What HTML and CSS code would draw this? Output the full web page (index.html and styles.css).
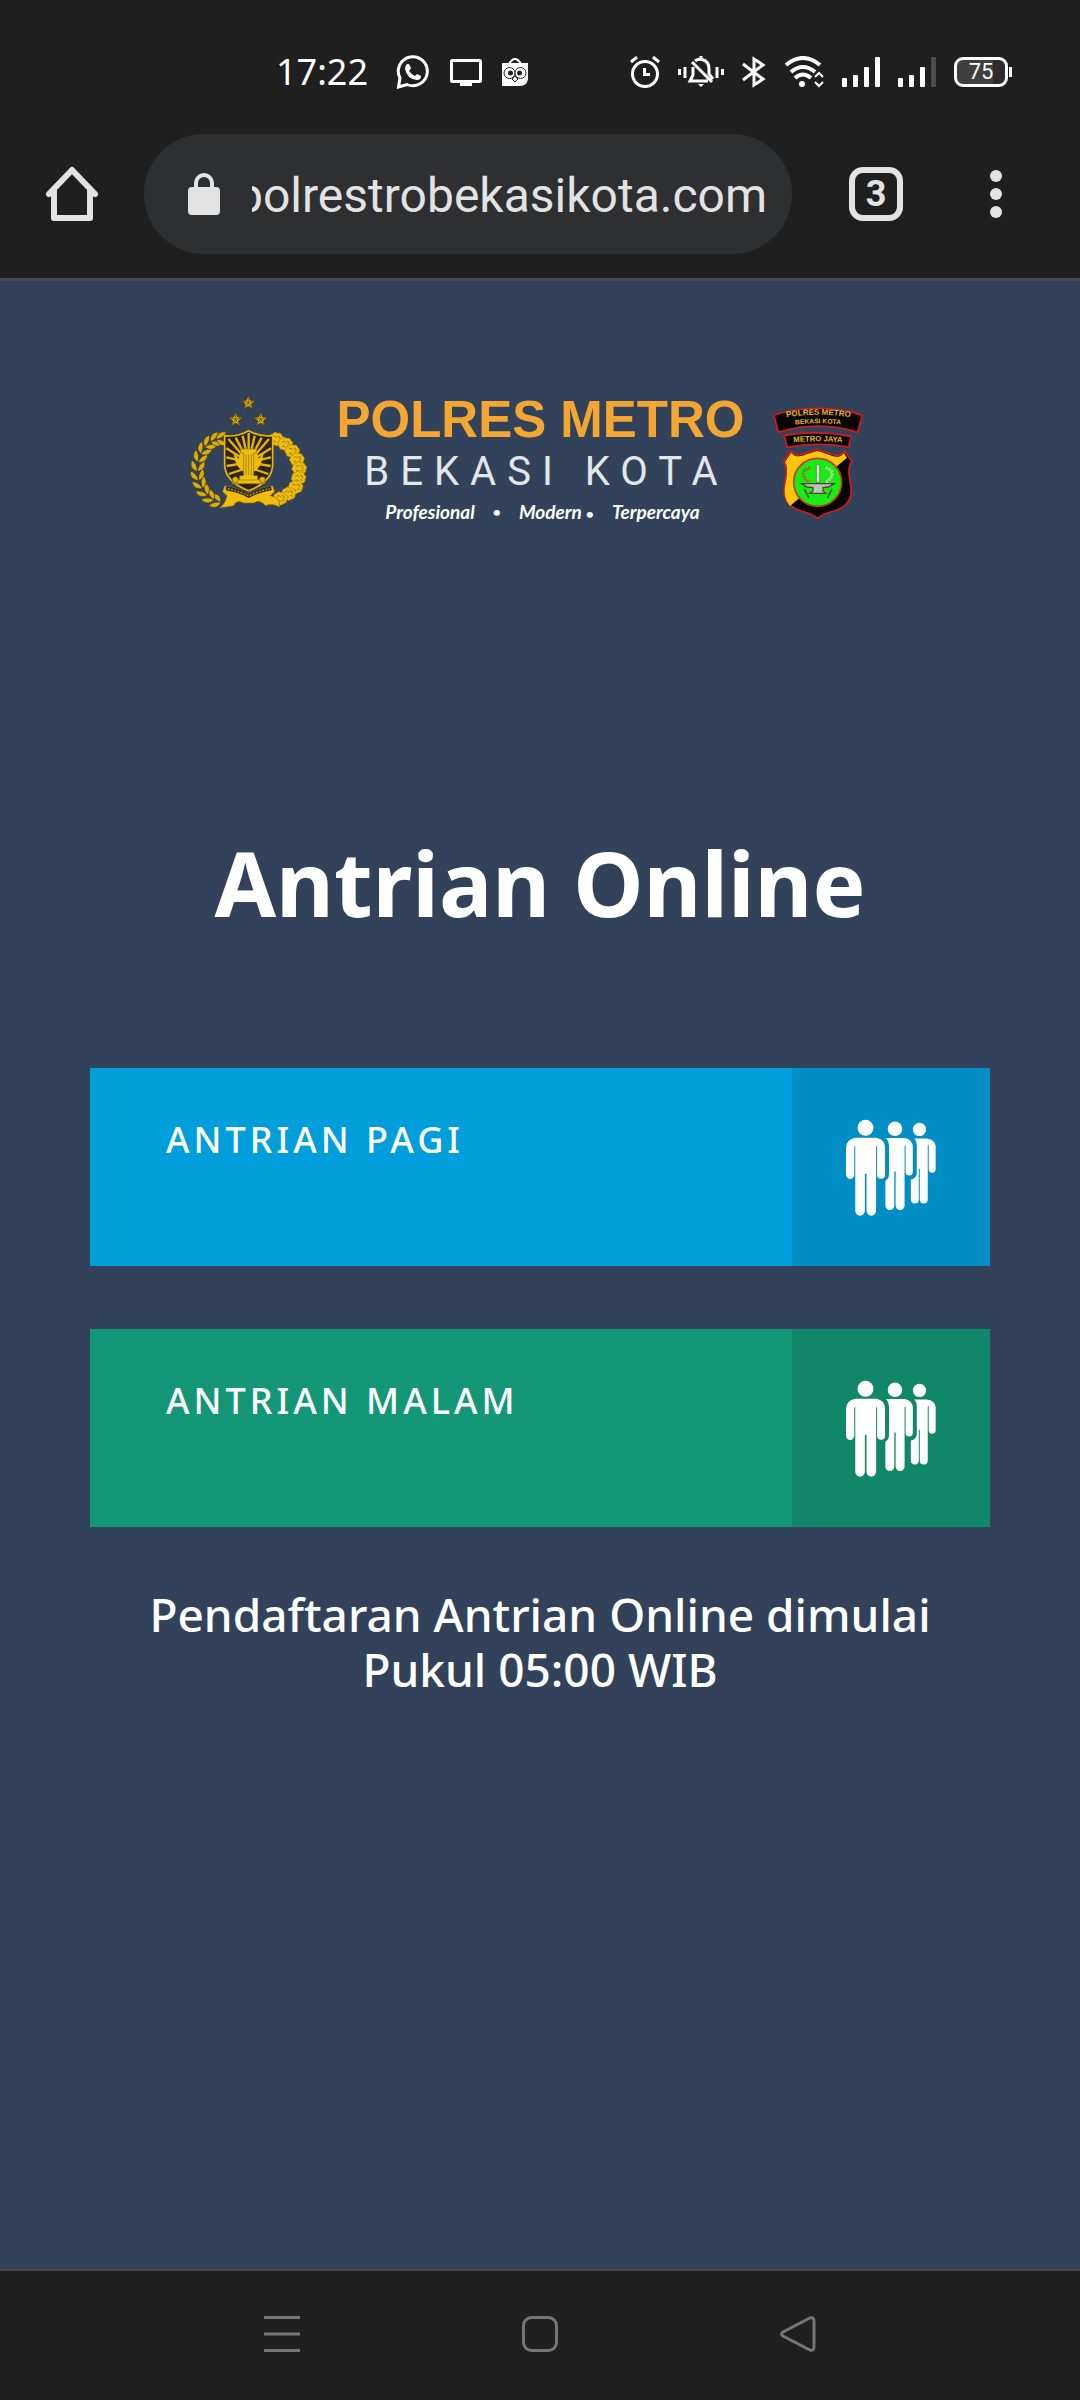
FILE: index.html
```html
<!DOCTYPE html>
<html lang="id">
<head>
<meta charset="utf-8">
<meta name="viewport" content="width=device-width, initial-scale=1">
<title>Antrian Online</title>
<link rel="stylesheet" href="styles.css">
</head>
<body>
<svg class="defs" width="0" height="0" aria-hidden="true">
  <defs>
    <symbol id="people" viewBox="197 170 272 290">
      <g fill="currentColor">
        <circle cx="256" cy="195" r="24"/>
        <path d="M227 225H288Q315 229 315 256V337A12 12 0 0 1 291 337V251H288V446A14.500 14.500 0 0 1 259 446V334H254V446A14.500 14.500 0 0 1 225 446V251H222V337A12.500 12.500 0 0 1 197 337V256Q199 228 227 225Z"/>
        <circle cx="345" cy="198" r="22"/>
        <path d="M317 226H374Q398 230 399 253V328A11 11 0 0 1 377 328V249H374V430A13.500 13.500 0 0 1 347 430V327H343V430A13.500 13.500 0 0 1 316 430V355Q327 350 327 335V250Q326 233 317 226Z"/>
        <circle cx="419" cy="200" r="20"/>
        <path d="M403 227H441Q466 230 468 250V320A10.500 10.500 0 0 1 447 320V248H444V412A12 12 0 0 1 420 412V319H417V412A12 12 0 0 1 393 412V351Q411 348 411 330V250Q411 234 403 227Z"/>
      </g>
    </symbol>
    <g id="star">
      <path d="M0-23 6-7 22-6 9 4 14 20 0 11-14 20-9 4-22-6-6-7Z" fill="#e2b310" stroke="#3a3320" stroke-width="2"/>
      <path d="M0 0V-18M0 0L18-5M0 0 11 16M0 0-11 16M0 0-18-5" fill="none" stroke="#4a3b10" stroke-width="2"/>
    </g>
    <g id="leaf">
      <path d="M0 12C-19 9-24-6-19-20C-8-14-1-3 0 12ZM0 12C19 9 24-6 19-20C8-14 1-3 0 12Z" fill="#d9ac0d" stroke="#40381d" stroke-width="2"/>
    </g>
    <g id="boll">
      <path d="M-20-4Q-20-14-11-15Q-5-24 3-17Q14-20 17-10Q26-4 19 5Q20 15 9 16Q1 24-7 17Q-18 18-18 8Q-26 3-20-4Z" fill="#f0bd0a" stroke="#b98b08" stroke-width="2"/>
      <path d="M-10-6Q-2-12 2-3M4-9Q13-9 11 1M-10 7Q-3 3 0 11M5 6Q11 4 13 9" fill="none" stroke="#9b7410" stroke-width="3"/>
    </g>
  </defs>
</svg>

<header class="browser">
  <div class="status">
    <div class="status-group">
      <time class="clock">17:22</time>
      <svg width="34" height="34" viewBox="0 0 34 34" fill="none" stroke="#fff" stroke-width="3"><path d="M4 23A14.500 14.500 0 1 1 11 29.500L2.500 32Z"/><path d="M9.500 11Q11 8 13 9L15 13Q14 15 13 16Q16 20 19 21L21 19L25 21Q25 25 21 25Q11 24 9 14Z" fill="#fff" stroke="none"/></svg>
      <svg width="32" height="28" viewBox="0 0 32 28"><rect x="1.500" y="2.500" width="29" height="21" rx="1" fill="none" stroke="#fff" stroke-width="3"/><path d="M10 24h12v4H10z" fill="#fff"/></svg>
      <svg width="26" height="28" viewBox="0 0 26 28"><path d="M0 5H26V21Q25 28 18 28H0Z" fill="#fff"/><path d="M7 6Q13-4 19 6" fill="none" stroke="#fff" stroke-width="2"/><g fill="#fff" stroke="#222" stroke-width="1"><circle cx="7.500" cy="15" r="5.500"/><circle cx="18.500" cy="15" r="5.500"/><path d="M13 18l3 3-3 3-3-3z"/></g><circle cx="8.500" cy="15" r="2.500" fill="#222"/><circle cx="17.500" cy="15" r="2.500" fill="#222"/></svg>
    </div>
    <div class="status-group status-icons">
      <svg width="30" height="32" viewBox="0 0 30 32" fill="none" stroke="#fff" stroke-width="3"><circle cx="15" cy="18" r="12.500"/><path d="M1 6l6-5M23 1l6 5" stroke-width="3"/><path d="M14.500 12v6.500H20" stroke-width="3"/></svg>
      <svg width="46" height="32" viewBox="0 0 46 32" fill="none" stroke="#fff"><path d="M1.500 13v6M7 11v11M39 11v11M44.500 13v6" stroke-width="3"/><path d="M17 5Q20 2.500 24 3.500Q31 5 31 13V18L35 23M15 11V19L12 25H30M14 6L34 26" stroke-width="3"/><path d="M23 0v3" stroke-width="3"/><path d="M20 28h6l-3 3z" fill="#fff" stroke="none"/></svg>
      <svg width="24" height="32" viewBox="0 0 24 32" fill="none" stroke="#fff" stroke-width="3"><path d="M1 8L21 23 12 29V3L21 9 1 24"/></svg>
      <svg width="40" height="32" viewBox="0 0 40 32" fill="none" stroke="#fff" stroke-width="4"><path d="M2 9Q19-5 36 9M7 16Q19 6 31 16M11 22Q19 15 27 22"/><circle cx="18" cy="28" r="3" fill="#fff" stroke="none"/><path d="M31 21l4-4 4 4M31 26l4 4 4-4" stroke-width="2"/></svg>
      <svg width="38" height="30" viewBox="0 0 38 30" fill="#fff"><rect y="21" width="5" height="9" rx="1"/><rect x="11" y="18" width="5" height="12" rx="1"/><rect x="22" y="10" width="5" height="20" rx="1"/><rect x="33" width="5" height="30" rx="1"/></svg>
      <svg width="38" height="30" viewBox="0 0 38 30" fill="#fff"><rect y="21" width="5" height="9" rx="1"/><rect x="11" y="18" width="5" height="12" rx="1"/><rect x="22" y="10" width="5" height="20" rx="1"/><rect x="33" width="5" height="30" rx="1" fill="#4c4c4c"/></svg>
      <span class="battery">75</span>
    </div>
  </div>
  <div class="toolbar">
    <button class="icon-button" aria-label="Beranda">
      <svg width="54" height="56" viewBox="0 0 54 56" fill="none" stroke="#e3e3e3" stroke-width="6" stroke-linecap="round" stroke-linejoin="round"><path d="M4 28L27 4 50 28M9 24V52H45V24"/></svg>
    </button>
    <div class="address">
      <svg width="32" height="42" viewBox="0 0 32 42"><path d="M8 16V10A8 8 0 0 1 24 10V16" fill="none" stroke="#e3e3e3" stroke-width="4"/><rect y="14" width="32" height="28" rx="4" fill="#e3e3e3"/></svg>
      <input class="url" type="text" aria-label="Alamat situs" value="polrestrobekasikota.com">
    </div>
    <button class="tabs" aria-label="Tab terbuka">3</button>
    <button class="icon-button menu" aria-label="Menu">
      <svg width="12" height="48" viewBox="0 0 12 48" fill="#e3e3e3"><circle cx="6" cy="6" r="6"/><circle cx="6" cy="24" r="6"/><circle cx="6" cy="42" r="6"/></svg>
    </button>
  </div>
</header>

<main class="page">
  <div class="brand">
    <svg width="118" height="115" viewBox="59 45 354 345" aria-hidden="true">
      <use href="#star" transform="translate(234 71)"/>
      <use href="#star" transform="translate(196 121)"/>
      <use href="#star" transform="translate(271 121)"/>
      <use href="#leaf" transform="translate(140 367) rotate(-75)"/>
      <use href="#leaf" transform="translate(120 356) rotate(-59)"/>
      <use href="#leaf" transform="translate(103 339) rotate(-43)"/>
      <use href="#leaf" transform="translate(91 317) rotate(-27)"/>
      <use href="#leaf" transform="translate(83 292) rotate(-11)"/>
      <use href="#leaf" transform="translate(82 265) rotate(5)"/>
      <use href="#leaf" transform="translate(87 238) rotate(21)"/>
      <use href="#leaf" transform="translate(98 215) rotate(37)"/>
      <use href="#leaf" transform="translate(113 196) rotate(53)"/>
      <use href="#leaf" transform="translate(132 184) rotate(69)"/>
      <use href="#leaf" transform="translate(150 180) rotate(85)"/>
      <use href="#boll" x="318" y="180"/>
      <use href="#boll" x="345" y="195"/>
      <use href="#boll" x="366" y="216"/>
      <use href="#boll" x="380" y="241"/>
      <use href="#boll" x="387" y="268"/>
      <use href="#boll" x="385" y="297"/>
      <use href="#boll" x="376" y="324"/>
      <use href="#boll" x="355" y="344"/>
      <use href="#boll" x="330" y="358"/>
      <path d="M163 170Q200 175 235 155Q270 175 307 170V260Q303 310 235 335Q167 310 163 260Z" fill="#2b2412" stroke="#e6b50c" stroke-width="5"/>
      <g stroke="#e6b50c" stroke-width="7">
        <path d="M235 250L174 180M235 250L196 176M235 250L217 170M235 250V162M235 250L253 170M235 250L274 176M235 250L296 180M235 250L168 208M235 250L302 208M235 250L168 235M235 250L302 235M235 250L169 261M235 250L301 261M235 265L176 285M235 265L294 285"/>
      </g>
      <path d="M190 220Q195 270 225 280V300H245V280Q275 270 280 220L265 240 258 210H212L205 240Z" fill="#eebd0c"/>
      <path d="M211 210H258V222H250V290H262V302H284V314H186V302H208V290H220V222H211Z" fill="#f0c00c" stroke="#8f6e0c" stroke-width="2"/>
      <path d="M227 226V288M235 226V288M243 226V288M208 303H262" stroke="#8f6e0c" stroke-width="2"/>
      <circle cx="195" cy="302" r="9" fill="#e6b50c" stroke="#6d540c" stroke-width="2"/>
      <circle cx="276" cy="302" r="9" fill="#e6b50c" stroke="#6d540c" stroke-width="2"/>
      <path d="M163 320Q200 326 235 343Q270 326 307 320L313 338 300 350Q330 355 328 384Q305 372 285 380Q270 360 250 372H220Q200 360 190 380Q170 384 148 386Q165 375 170 350L157 338Z" fill="#efbd0a" stroke="#8f6e0c" stroke-width="2"/>
      <path d="M167 328Q205 334 235 350Q265 334 303 328" fill="none" stroke="#33290f" stroke-width="12"/>
      <path d="M172 329Q205 336 235 350Q265 336 299 329" fill="none" stroke="#a9861a" stroke-width="5" stroke-dasharray="6 4"/>
    </svg>
    <div class="brand-text">
      <strong class="brand-name">POLRES METRO</strong>
      <span class="brand-city">BEKASI KOTA</span>
      <em class="tagline"><span>Profesional</span><span class="dot">•</span><span>Modern<span class="dot">•</span></span><span>Terpercaya</span></em>
    </div>
    <svg width="90" height="112" viewBox="72 82 270 336" aria-hidden="true">
      <g stroke="#d8191f" stroke-width="5" stroke-linejoin="round">
        <path d="M75 106Q208 65 340 107L326 158Q208 120 88 158Z" fill="#080404"/>
        <path d="M105 167Q207 151 307 170L299 202Q207 185 115 203Z" fill="#080404"/>
        <path d="M125 214Q140 235 172 220Q190 216 206 209Q222 216 240 221Q272 236 287 214L308 246Q295 262 303 305Q320 375 255 394Q222 402 206 416Q190 402 157 394Q92 375 109 305Q117 262 104 246Z" fill="#080404"/>
      </g>
      <path d="M126 219Q143 239 174 223Q190 219 206 213Q222 219 240 225Q272 239 285 220L294 234L123 379Q98 350 111 305Q119 262 108 247Z" fill="#ffc40c"/>
      <circle cx="206" cy="308" r="72" fill="#18ed13" stroke="#bd3d19" stroke-width="5"/>
      <path d="M202 258Q207 248 212 258V308H202Z" fill="#dce3d8" stroke="#46733d" stroke-width="2"/>
      <path d="M158 312H256L238 322 222 324V334L230 341H182L192 334V324L174 322Z" fill="#b8c7b3" stroke="#5b4031" stroke-width="4"/>
      <path d="M184 264Q158 270 164 288Q165 302 184 306" fill="none" stroke="#8e7620" stroke-width="10" stroke-dasharray="6 3"/>
      <path d="M230 264Q254 272 248 290Q243 303 230 306" fill="none" stroke="#bed9b6" stroke-width="9" stroke-dasharray="6 3"/>
      <path d="M166 328L180 355M249 328L235 355" fill="none" stroke="#40651f" stroke-width="5"/>
      <path id="arc-top" d="M85 118Q208 92 332 118" fill="none"/>
      <path id="arc-city" d="M112 138Q208 124 302 138" fill="none"/>
      <path id="arc-metro" d="M112 190Q207 180 302 190" fill="none"/>
      <g class="badge-text" fill="#e9b91c" text-anchor="middle">
        <text font-size="24"><textPath href="#arc-top" startOffset="50%">POLRES METRO</textPath></text>
        <text font-size="20"><textPath href="#arc-city" startOffset="50%">BEKASI KOTA</textPath></text>
        <text font-size="23"><textPath href="#arc-metro" startOffset="50%">METRO JAYA</textPath></text>
      </g>
    </svg>
  </div>

  <h1 class="title">Antrian Online</h1>

  <nav class="queues" aria-label="Pilihan antrian">
    <a class="queue morning" href="#pagi">
      <span class="queue-label">ANTRIAN PAGI</span>
      <span class="queue-icon"><svg width="90" height="97"><use href="#people"/></svg></span>
    </a>
    <a class="queue night" href="#malam">
      <span class="queue-label">ANTRIAN MALAM</span>
      <span class="queue-icon"><svg width="90" height="97"><use href="#people"/></svg></span>
    </a>
  </nav>

  <p class="note">Pendaftaran Antrian Online dimulai Pukul 05:00 WIB</p>
</main>

<footer class="system-nav">
  <button class="icon-button" aria-label="Aplikasi terkini"><svg width="36" height="36" viewBox="0 0 36 36" stroke="#757575" stroke-width="3"><path d="M0 1.500H36M0 18H36M0 34.500H36"/></svg></button>
  <button class="icon-button" aria-label="Layar utama"><svg width="36" height="36" viewBox="0 0 36 36"><rect x="1.500" y="1.500" width="33" height="33" rx="8" fill="none" stroke="#757575" stroke-width="3"/></svg></button>
  <button class="icon-button" aria-label="Kembali"><svg width="36" height="36" viewBox="0 0 36 36"><path d="M3 16L30 2Q34 1 34 5V31Q34 35 30 34L3 20Q0 18 3 16Z" fill="none" stroke="#757575" stroke-width="3"/></svg></button>
</footer>
</body>
</html>
```
FILE: styles.css
```css
* {
  box-sizing: border-box;
}

body {
  margin: 0;
  min-height: 100vh;
  display: flex;
  flex-direction: column;
  background: #32425b;
  color: #fff;
  font-family: "Noto Sans", sans-serif;
}

svg {
  display: block;
  flex: none;
}

.defs {
  position: absolute;
}

button {
  padding: 0;
  border: 0;
  background: none;
  color: inherit;
  font: inherit;
}

/* Browser chrome */
.browser {
  background: #1f1f1f;
  border-bottom: 3px solid #464a48;
}

.status {
  display: flex;
  justify-content: space-between;
  height: 134px;
  padding: 10px 68px 0 276px;
}

.status-group {
  display: flex;
  align-items: center;
  gap: 20px;
}

.status-icons {
  gap: 18px;
}

.clock {
  margin-right: 8px;
  font: 36px/48px "Noto Sans", sans-serif;
}

.battery {
  position: relative;
  width: 54px;
  height: 30px;
  margin-right: 4px;
  border: 3px solid #fff;
  border-radius: 9px;
  background: linear-gradient(90deg, #404040 75%, #2c2c2c 75%);
  font: 22px/24px Roboto, sans-serif;
  text-align: center;
}

.battery::after {
  content: "";
  position: absolute;
  top: 7px;
  right: -7px;
  width: 3px;
  height: 10px;
  background: #fff;
}

.toolbar {
  display: flex;
  align-items: center;
  height: 144px;
  padding: 0 34px 24px 0;
}

.icon-button {
  flex: none;
  display: flex;
  justify-content: center;
  align-items: center;
}

.toolbar .icon-button {
  width: 144px;
  height: 120px;
}

.address {
  flex: 1;
  min-width: 0;
  display: flex;
  align-items: center;
  gap: 32px;
  height: 120px;
  padding: 0 25px 0 44px;
  border-radius: 60px;
  background: #2e2f31;
}

.url {
  flex: 1;
  min-width: 0;
  height: 74px;
  padding: 2px 0 0;
  border: 0;
  outline: 0;
  background: none;
  color: #e3e3e3;
  font: 48px/72px Roboto, sans-serif;
  /* keeps the end of a long address in view */
  direction: rtl;
}

.tabs {
  flex: none;
  width: 54px;
  height: 54px;
  margin-left: 57px;
  border: 6px solid #e3e3e3;
  border-radius: 14px;
  color: #e3e3e3;
  font: bold 36px/42px Roboto, sans-serif;
}

.toolbar .menu {
  width: 100px;
  margin-left: 43px;
}

/* Page */
.page {
  flex: 1;
  padding: 113px 90px;
}

.brand {
  display: flex;
  justify-content: center;
  gap: 28px;
  padding-right: 27px;
}

.brand svg:last-child {
  margin-top: 13px;
}

.brand-text {
  display: flex;
  flex-direction: column;
  align-items: center;
}

.brand-name {
  color: #f4a632;
  font: bold 51px/52px "Liberation Sans", sans-serif;
}

.brand-city {
  padding-left: 12px;
  color: #e3e6ea;
  font: 40px/52px Roboto, sans-serif;
  letter-spacing: 11px;
}

.tagline {
  display: flex;
  gap: 14px;
  padding-left: 4px;
  font: italic bold 19px/28px Lato, sans-serif;
}

.dot {
  padding: 0 4px;
  font-size: 14px;
}

.badge-text {
  font-family: "Liberation Sans", sans-serif;
  font-weight: bold;
}

.title {
  margin: 303px 0 133px;
  font: bold 89px/104px "Noto Sans", sans-serif;
  text-align: center;
}

.queues {
  display: grid;
  gap: 63px;
}

.queue {
  display: flex;
  height: 198px;
  color: #fff;
  text-decoration: none;
}

.queue-label {
  flex: 1;
  padding: 48px 76px;
  font: 500 36px/48px "Noto Sans", sans-serif;
  letter-spacing: 4px;
}

.queue-icon {
  width: 198px;
  display: flex;
  justify-content: center;
  align-items: center;
}

.morning {
  background: #009fdb;
}

.morning .queue-icon {
  background: #008ec4;
}

.night {
  background: #149777;
}

.night .queue-icon {
  background: #118769;
}

.note {
  margin: 60px 0 0;
  padding: 0 30px;
  font: 500 46px/55px "Noto Sans", sans-serif;
  text-align: center;
}

/* System navigation */
.system-nav {
  display: flex;
  justify-content: space-between;
  height: 132px;
  padding: 0 264px 4px;
  border-top: 3px solid #464646;
  background: #1f1f1f;
}
```
